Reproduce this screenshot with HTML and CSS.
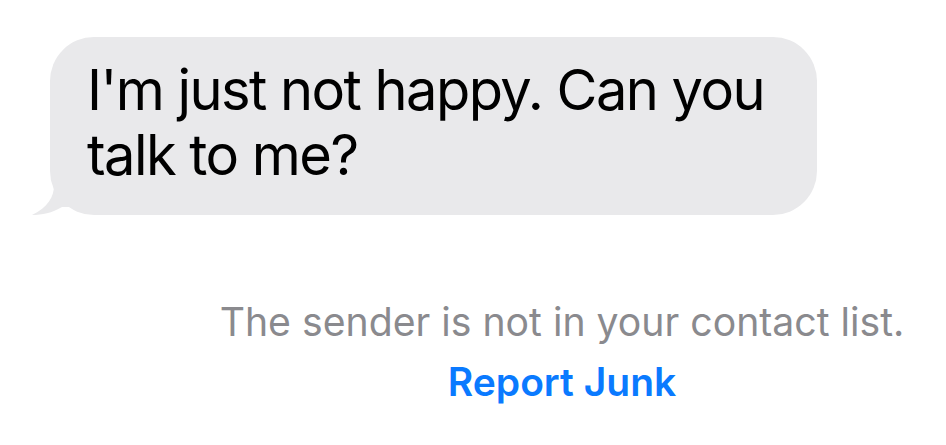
FILE: index.html
```html
<!DOCTYPE html>
<html>
<head>
<meta charset="utf-8">
<link rel="stylesheet" href="styles.css">
</head>
<body>
<div class="thread">
  <div class="bubble">
    <svg class="tail" width="40" height="30" viewBox="0 0 40 30"><path d="M22 0 C22 12 16 22 0 30 C10 30 20 28 30 22 L40 22 L40 0 Z" fill="#e9e9eb"/></svg>
    <p class="msg">I'm just not happy. Can you talk to me?</p>
  </div>
  <div class="notice">
    <p class="notice-text">The sender is not in your contact list.</p>
    <a class="report">Report Junk</a>
  </div>
</div>
</body>
</html>
```
FILE: styles.css
```css
html, body {
  margin: 0;
  padding: 0;
  background: #ffffff;
  width: 946px;
  height: 445px;
  overflow: hidden;
}
.thread {
  display: flex;
  flex-direction: column;
  padding-top: 37px;
  font-family: Inter, "Noto Sans", sans-serif;
}
.bubble {
  position: relative;
  margin-left: 50px;
  width: 767px;
  height: 178px;
  box-sizing: border-box;
  background: #e9e9eb;
  border-radius: 44px;
  padding: 21px 20px 0 37px;
}
.tail {
  position: absolute;
  left: -18px;
  bottom: 0;
}
.msg {
  margin: 0;
  width: 700px;
  font-size: 56px;
  line-height: 65px;
  color: #000;
  letter-spacing: -1.55px;
}
.notice {
  display: flex;
  flex-direction: column;
  align-items: center;
  margin-top: 84px;
  padding-left: 220px;
  width: 684px;
}
.notice-text {
  margin: 0;
  font-size: 39.2px;
  line-height: 46px;
  color: #8a8a8e;
  white-space: nowrap;
}
.report {
  margin-top: 14px;
  font-size: 39px;
  line-height: 46px;
  font-weight: 600;
  color: #0a7aff;
}
```
